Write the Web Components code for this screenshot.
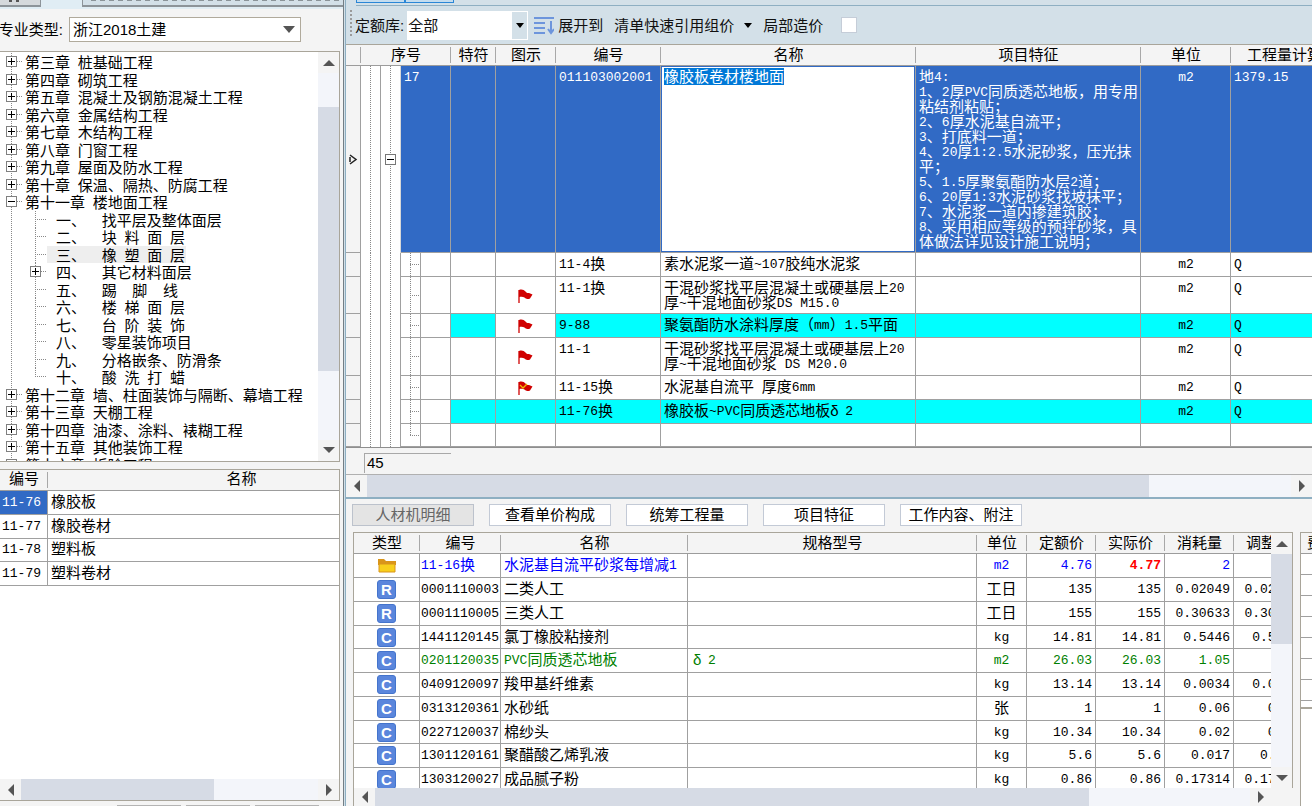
<!DOCTYPE html>
<html lang="zh-CN">
<head>
<meta charset="utf-8">
<meta name="viewport" content="width=device-width, initial-scale=1">
<title>清单计价</title>
<style>
html,body{margin:0;height:100%;overflow:hidden}
body{font:15px/15px "Liberation Sans","Noto Sans CJK SC",sans-serif;color:#000;background:#f4f4f4}
</style>
</head>
<body>
<cost-app></cost-app>
<script>
const BASE=`*{box-sizing:border-box}
.l{font-family:"Liberation Mono",monospace;font-size:13px;line-height:0;white-space:pre;vertical-align:1px}
.d{display:inline-block;width:15px;line-height:0}
button,select,textarea,input{font:inherit;color:inherit;margin:0;border-radius:0}
table{border-collapse:separate;border-spacing:0;table-layout:fixed}
th{font-weight:400;padding:0 0 2px;height:21px;background:linear-gradient(#a8a8a8,#a8a8a8) right center/1px 16px no-repeat #f4f4f4;border-bottom:1px solid #9c9c9c;white-space:nowrap}
td{padding:0 3px 2px;border-right:1px solid #a0a0a0;border-bottom:1px solid #a0a0a0;white-space:nowrap;overflow:hidden;background-color:#fff}`;
/* Half-width runs get the monospace face; everything else stays in the CJK face. */
const mix=t=>t.replace(/[\x20-\x7e]+/g,m=>`<span class="l">${m}</span>`).replace(/δ/g,'<span class="d">δ</span>');
const define=(name,css,html)=>customElements.define(name,class extends HTMLElement{
  constructor(){super();this.attachShadow({mode:'open'}).innerHTML=`<style>${BASE}${css}</style>${typeof html==='function'?html(this):html}`}
});

/* Scroll bar: track is split by the before / thumb / after weights. */
define('scroll-bar',`
:host{display:flex;background:#f3f5fa;min-width:0;min-height:0}
:host([vertical]){flex:0 0 21px;flex-direction:column}
button{flex:0 0 21px;border:0;padding:0;background:#f4f4f4;display:grid;place-items:center}
svg{width:12px;height:12px;fill:#555}
i{display:block;min-width:0;min-height:0}
.t{background:#d6dbe5}`,
el=>{const v=el.hasAttribute('vertical'),[a,b,c]=el.getAttribute('span').split(' ');
const p=v?['M0 9 6 3 12 9z','M0 3 6 9 12 3z']:['M9 0 3 6 9 12z','M3 0 9 6 3 12z'],n=v?['向上','向下']:['向左','向右'];
const btn=k=>`<button aria-label="${n[k]}"><svg viewBox="0 0 12 12"><path d="${p[k]}"/></svg></button>`;
return `${btn(0)}<i style="flex:${a}"></i><i class="t" style="flex:${b}"></i><i style="flex:${c}"></i>${btn(1)}`});

const tree=[['+','第三章 桩基础工程'],['+','第四章 砌筑工程'],['+','第五章 混凝土及钢筋混凝土工程'],['+','第六章 金属结构工程'],['+','第七章 木结构工程'],['+','第八章 门窗工程'],['+','第九章 屋面及防水工程'],['+','第十章 保温、隔热、防腐工程'],['-','第十一章 楼地面工程'],
['','一、  找平层及整体面层'],['','二、  块 料 面 层'],['s','三、  橡 塑 面 层'],['c','四、  其它材料面层'],['','五、  踢  脚  线'],['','六、  楼 梯 面 层'],['','七、  台 阶 装 饰'],['','八、  零星装饰项目'],['','九、  分格嵌条、防滑条'],['e','十、  酸 洗 打 蜡'],
['+','第十二章 墙、柱面装饰与隔断、幕墙工程'],['+','第十三章 天棚工程'],['+','第十四章 油漆、涂料、裱糊工程'],['+','第十五章 其他装饰工程'],['+','第十六章 拆除工程']];
define('chapter-tree',`
:host{display:flex;overflow:hidden;background:#fff}
.box{flex:1;min-width:0;overflow:hidden;padding-top:1px}
ul{list-style:none;margin:0;padding:0;height:420px;display:grid;grid-auto-rows:1fr;
 background:repeating-linear-gradient(#888 0 1px,transparent 1px 2px) 11px 0/1px 100% no-repeat}
li{display:flex;align-items:center;white-space:nowrap;
 background:repeating-linear-gradient(90deg,#888 0 1px,transparent 1px 2px) 17px 50%/6px 1px no-repeat;padding-left:6px}
b{flex:none;width:11px;height:11px;border:1px solid #808080;margin-right:8px;
 background:linear-gradient(#000,#000) center/7px 1px no-repeat,linear-gradient(#000,#000) center/1px 7px no-repeat,#fff}
.m b{background:linear-gradient(#000,#000) center/7px 1px no-repeat,#fff}
.k{padding-left:47px;--h:100%;background:repeating-linear-gradient(#888 0 1px,transparent 1px 2px) 35px 0/1px var(--h) no-repeat,repeating-linear-gradient(90deg,#888 0 1px,transparent 1px 2px) 35px 50%/12px 1px no-repeat}
.x{padding-top:2px}
.k .x{padding:2px 1px 0 9px}
.e{--h:50%}
.s .x{background:#eee}
.c{padding-left:30px}.c b{margin-right:6px}`,
`<div class="box"><ul role="tree">${tree.map(([k,t])=>{const top=k==='+'||k==='-';
return `<li role="treeitem" class="${top?(k==='-'?'m':''):'k '+k}">${top||k==='c'?'<b></b>':''}<span class="x">${mix(t)}</span></li>`}).join('')}</ul></div>
<scroll-bar vertical span="34 263 69"></scroll-bar>`);

define('quota-list',`
:host{display:flex;flex-direction:column;overflow:hidden;background:#fff}
.box{flex:1;overflow:hidden}
table{width:435px}
td{height:24px}tr:nth-child(3) td{height:23px}
td:first-child{padding:0 0 2px 2px}
td:last-child{border-right:0}
.s{background-color:#316ac5;color:#fff}
scroll-bar{height:21px}`,
`<div class="box"><table><colgroup><col style="width:48px"><col></colgroup><thead><tr><th>编号</th><th>名称</th></tr></thead><tbody>
${[['11-76','橡胶板'],['11-77','橡胶卷材'],['11-78','塑料板'],['11-79','塑料卷材']].map(([a,b],i)=>`<tr><td class="${i?'':'s'}">${mix(a)}</td><td>${b}</td></tr>`).join('')}
</tbody></table></div><scroll-bar span="0 194 104"></scroll-bar>`);

define('quota-pane',`
:host{display:flex;flex-direction:column;overflow:hidden;background:#f4f4f4}
.tabs{flex:0 0 9px;display:flex;align-items:flex-start;gap:41px;background:#e0edf4}
.tabs i{height:7px;border:solid #8d9499;border-width:0 1px 2px;background:#cfdce4}
.tabs i:first-child{width:41px;border-left:0;background:repeating-linear-gradient(90deg,#555 0 3px,transparent 3px 7px) 9px 0/14px 2px no-repeat,#d5d9dc}
.tabs i:last-child{flex:1;border-right:0;background:repeating-linear-gradient(90deg,#8b9499 0 5px,transparent 5px 9px) 8px 0/100% 1px no-repeat,#d3e0e8}
.row{flex:0 0 42px;display:flex;align-items:center;padding-bottom:2px}
label{width:69px;display:flex;justify-content:flex-end;overflow:hidden;padding-right:6px;white-space:nowrap}
.sel{position:relative;width:232px;height:25px}
select{width:100%;height:100%;appearance:none;border:1px solid #b0aa9c;background:#fff;padding:0 3px;outline:0}
.sel svg{position:absolute;right:6px;top:8px;width:12px;height:9px;fill:#555;pointer-events:none}
chapter-tree{flex:411 0 0;border:1px solid #a9a59a;border-left:0;margin-right:3px}
quota-list{flex:332 0 0;border:1px solid #a9a59a;border-left:0;margin:7px 3px 0 0}
.foot{flex:0 0 5px;display:flex;align-items:flex-end;gap:5px;padding-left:117px}
.foot i{width:64px;height:1px;background:#b4b4b4}`,
`<div class="tabs"><i></i><i></i></div>
<div class="row"><label for="t">专业类型:</label><div class="sel"><select id="t"><option>浙江2018土建</option></select><svg viewBox="0 0 12 9"><path d="M0 1h12L6 8z"/></svg></div></div>
<chapter-tree></chapter-tree><quota-list></quota-list><div class="foot"><i></i><i></i><i></i></div>`);

define('cost-toolbar',`
:host{display:flex;flex-direction:column;background:#d3e0e8;height:45px;border-bottom:1px solid #a9a59a;overflow:hidden}
.up{flex:0 0 6px;margin-left:10px;border-bottom:1px solid #8eafc2;display:flex}
.up i{width:49px;height:3px;border:1px solid #2a86d6;border-top:0;background:#c4dcee}
.bar{flex:1;display:flex;align-items:center;padding-left:3px;white-space:nowrap;
 background:repeating-linear-gradient(#9a9a9a 0 2px,transparent 2px 4px) 4px 4px/2px 28px no-repeat;color:#111}
label[for=lib]{margin-left:6px;margin-right:3px}
.sel{position:relative;width:121px;height:29px}
select{appearance:none;border:0;width:100%;height:100%;padding:0 0 0 1px;background:linear-gradient(#d3e0e8,#d3e0e8) 105px 1px/15px 27px no-repeat,#fff}
svg{display:block;flex:none}
.sel svg{position:absolute;right:4px;top:12px;pointer-events:none}
button{border:0;background:none;padding:0;display:flex;align-items:center}
.b1{gap:4px;margin:0 11px 0 6px}.b2{gap:10px;margin-right:11px}
.ck{display:flex;align-items:center;gap:18px}
input{appearance:none;width:16px;height:16px;border:1px solid #c5cdd8;background:#fff}`,
`<div class="up"><i></i><i></i></div><div class="bar"><label for="lib">定额库:</label><div class="sel"><select id="lib"><option>全部</option></select><svg width="8" height="5"><path d="M0 0h8L4 5z"/></svg></div>
<button class="b1"><svg width="20" height="19" fill="none" stroke="#6d95dc" stroke-width="2"><path d="M0 2h20M0 7h11M0 12h11M0 17h11M17 5v12M14 13l3 4 3-4"/></svg>展开到</button>
<button class="b2">清单快速引用组价<svg width="8" height="5"><path d="M0 0h8L4 5z"/></svg></button>
<span class="ck"><label for="part">局部造价</label><input id="part" type="checkbox"></span></div>`);

const flag=(c)=>`<svg width="15" height="15" viewBox="0 0 15 15"><path d="M1 1v13" stroke="#d00000" stroke-width="1.3"/><path d="M1 1C4 0 6 1 7.500 2.500 9 4.500 10 4 11 4l3.500 1.500L12 9.500C10 10.500 8 10 6.500 8.500 5 7.500 3 7.500 1 8z" fill="#d00000"/>${c?'<path d="M2 4l3 3 4-4" fill="none" stroke="#f2b705" stroke-width="1.300"/>':''}</svg>`;
const bill=[[24,'','11-4换','素水泥浆一道~107胶纯水泥浆'],[37,'f','11-1换','干混砂浆找平层混凝土或硬基层上20<br>厚~干混地面砂浆DS M15.0'],[24,'f h','9-88','聚氨酯防水涂料厚度（mm）1.5平面'],[38,'f','11-1','干混砂浆找平层混凝土或硬基层上20<br>厚~干混地面砂浆 DS M20.0'],[24,'g','11-15换','水泥基自流平 厚度6mm'],[24,'h','11-76换','橡胶板~PVC同质透芯地板δ2'],[23,'','','']];
const feature=['地4:','1、2厚PVC同质透芯地板，用专用','粘结剂粘贴；','2、6厚水泥基自流平；','3、打底料一道；','4、20厚1:2.5水泥砂浆，压光抹','平；','5、1.5厚聚氨酯防水层2道；','6、20厚1:3水泥砂浆找坡抹平；','7、水泥浆一道内掺建筑胶；','8、采用相应等级的预拌砂浆，具','体做法详见设计施工说明；'];
const lines=s=>s.split('<br>').map(mix).join('<br>');
define('bill-grid',`
:host{display:flex;flex-direction:column;overflow:hidden;background:#f4f4f4}
.box{overflow:hidden;border-bottom:1px solid #8e8e8e}
table{width:100%;min-width:1007px}
td{vertical-align:top;padding:3px 2px 0 3px}
.n{background-color:#f4f4f4;padding:0;vertical-align:middle;text-align:center}
.n svg{display:block;margin:auto}
.v{padding:0;border-bottom:0;position:relative;background:repeating-linear-gradient(#888 0 1px,#fff 1px 2px) 9px 0/1px var(--h,100%) no-repeat,#fff}
.w{background:repeating-linear-gradient(#888 0 1px,transparent 1px 2px) 9px 0/1px var(--h,100%) no-repeat,repeating-linear-gradient(90deg,#888 0 1px,transparent 1px 2px) 9px 50%/10px 1px no-repeat,#fff;border-bottom:1px solid #a0a0a0}
tr:last-child .w{--h:50%}
.m{vertical-align:middle;overflow:visible;border-right-color:#d8d8d8}
.m b{display:block;width:11px;height:11px;margin-left:4px;border:1px solid #777;background:linear-gradient(#000,#000) center/7px 1px no-repeat,#fff}
.c{text-align:center}
.i{vertical-align:middle;text-align:center;padding:2px 0 0}
.i svg{display:block;margin:auto}
.on td:not(.n,.v,.e){background-color:#316ac5;color:#fff}
.h .y{background-color:#0ff}
.on .e{padding:0;height:187px}
textarea{display:block;width:100%;height:186px;border:1px solid #316ac5;outline:0;resize:none;padding:2px;background:#fff;overflow:hidden;line-height:15px}
textarea::selection{background:#0078d7;color:#fff}
.foot{height:27px;padding:5px 0 0 18px;border-bottom:1px solid #b0b0b0}
output{display:block;width:87px;height:20px;border:solid #a8a8a8;border-width:1px 0 0 1px;padding:1px 2px}
scroll-bar{height:22px}`,
`<div class="box"><table><colgroup>${[15,20,20,20,30,45,60,105,255,225,90].map(w=>`<col style="width:${w}px">`).join('')}<col></colgroup>
<thead><tr><th></th><th colspan="4">序号</th><th>特符</th><th>图示</th><th>编号</th><th>名称</th><th>项目特征</th><th>单位</th><th>工程量计算式</th></tr></thead><tbody>
<tr class="on"><td class="n"><svg width="9" height="11" fill="none" stroke="#222" stroke-width="1.500"><path d="M1 1l6 4.500L1 10M1 3v5" /></svg></td><td class="v"></td><td class="v m"><b></b></td><td colspan="2">${mix('17')}</td><td></td><td></td><td>${mix('011103002001')}</td><td class="e"><textarea aria-label="名称" spellcheck="false">橡胶板卷材楼地面</textarea></td><td style="overflow:visible">${lines(feature.join('<br>'))}</td><td class="c">${mix('m2')}</td><td>${mix('1379.15')}</td></tr>
${bill.map(([h,k,a,b])=>`<tr class="${k.includes('h')?'h':''}" style="height:${h}px"><td class="n"></td><td class="v"></td><td class="v"></td><td class="v w"></td><td></td><td class="y"></td><td class="i ${k==='h'?'y':''}">${/[fg]/.test(k)?flag(k==='g'):''}</td><td class="y">${mix(a)}</td><td class="y">${lines(b)}</td><td class="y"></td><td class="c y">${a?mix('m2'):''}</td><td class="y">${a?mix('Q'):''}</td></tr>`).join('')}
</tbody></table></div><div class="foot"><output>45</output></div><scroll-bar span="0 780 142"></scroll-bar>`);

define('detail-tabs',`
:host{display:flex;gap:15px;padding:5px 0 0 6px;height:35px;background:#f4f4f4;border-top:2px solid #8eafc2}
button{flex:none;width:122px;height:22px;border:1px solid #c3cad6;background:#fff;padding:0 0 1px;line-height:18px}
button[disabled]{background:#e4e4e4;color:#666;border-color:#bcc2cc}`,
`<button disabled>人材机明细</button><button>查看单价构成</button><button>统筹工程量</button><button>项目特征</button><button>工作内容、附注</button>`);

const res=[['F','11-16换','水泥基自流平砂浆每增减1','','m2','4.76','4.77','2',''],['R','0001110003','二类人工','','工日','135','135','0.02049','0.02049'],['R','0001110005','三类人工','','工日','155','155','0.30633','0.30633'],['C','1441120145','氯丁橡胶粘接剂','','kg','14.81','14.81','0.5446','0.5446'],['C','0201120035','PVC同质透芯地板','δ2','m2','26.03','26.03','1.05',''],['C','0409120097','羧甲基纤维素','','kg','13.14','13.14','0.0034','0.0034'],['C','0313120361','水砂纸','','张','1','1','0.06','0.06'],['C','0227120037','棉纱头','','kg','10.34','10.34','0.02','0.02'],['C','1301120161','聚醋酸乙烯乳液','','kg','5.6','5.6','0.017','0.017'],['C','1303120027','成品腻子粉','','kg','0.86','0.86','0.17314','0.17314']];
define('resource-grid',`
:host{display:flex;flex:1;min-height:0;gap:7px;padding-left:7px;background:#f4f4f4}
.main{flex:1;min-width:0;display:flex;flex-direction:column;border:solid #a9a59a;border-width:1px 0 0 1px}
.top{flex:1;display:flex;min-height:0;border-right:1px solid #a9a59a}
.box{flex:1;min-width:0;overflow:hidden;background:#fff}
table{width:calc(100% + 32px)}
td{height:24px}tr:nth-child(4n) td{height:23px}
td:nth-child(1){text-align:center;padding:0}
td:nth-child(2){padding:0 0 2px 1px}
td:nth-child(4){padding-left:5px}
td:nth-child(5){text-align:center}
td:nth-child(n+6){text-align:right;padding-right:3px}
.F{color:#00f}.F td:nth-child(7){color:red;font-weight:700}
.G{color:#008000}
svg,u{display:block;margin:auto}
u{width:19px;height:19px;border-radius:3px;background:#5a86dc;border:1px solid #4474cc;color:#fff;text-decoration:none;font:bold 15px/17px "Liberation Sans",sans-serif}
.bot{height:18px;display:flex;padding-right:22px}
.bot scroll-bar{flex:1}
.side{flex:0 0 12px;overflow:hidden;display:flex;flex-direction:column}
.side div{border:solid #a9a59a;border-width:1px 0 2px 1px;background:#fff;height:177px;overflow:hidden}
.side table{width:26px}.side td{height:21px;border-right:0}
.side tr:nth-child(4n) td{height:21px}
.side th{padding-left:6px;text-align:left;background-image:none}
.side p{margin:0;flex:1;background:#fff;border-left:1px solid #a9a59a}`,
`<div class="main"><div class="top"><div class="box"><table><colgroup>${[66,81,187,0,50,69,69,69,69].map(w=>w?`<col style="width:${w}px">`:'<col>').join('')}</colgroup><thead><tr>${['类型','编号','名称','规格型号','单位','定额价','实际价','消耗量','调整量'].map(h=>`<th>${h}</th>`).join('')}</tr></thead><tbody>
${res.map((r,i)=>`<tr class="${i===4?'G':r[0]}"><td>${r[0]==='F'?'<svg width="18" height="15"><path d="M0 1h6l2 2h10v4H0z" fill="#d9951a"/><path d="M1 6h16v8H1z" fill="#f8cf1c" stroke="#d9951a"/></svg>':`<u>${r[0]}</u>`}</td>${r.slice(1).map(c=>`<td>${mix(c)}</td>`).join('')}</tr>`).join('')}
</tbody></table></div><scroll-bar vertical span="0 90 122"></scroll-bar></div><div class="bot"><scroll-bar span="0 712 161"></scroll-bar></div></div>
<div class="side"><div><table><thead><tr><th>费</th></tr></thead><tbody>${'<tr><td></td></tr>'.repeat(7)}</tbody></table></div><p></p></div>`);

define('cost-app',`
:host{display:flex;height:100vh;overflow:hidden}
quota-pane{flex:0 0 343px}
.split{flex:0 0 3px;background:#d3e0e8;border-left:1px solid #747e84;border-right:1px solid #8eafc2}
main{flex:1;min-width:0;display:flex;flex-direction:column}
bill-grid,cost-toolbar,detail-tabs{flex:none}`,
`<quota-pane></quota-pane><div class="split"></div><main><cost-toolbar></cost-toolbar><bill-grid></bill-grid><detail-tabs></detail-tabs><resource-grid></resource-grid></main>`);

const editor=document.querySelector('cost-app').shadowRoot.querySelector('bill-grid').shadowRoot.querySelector('textarea');
editor.focus();
editor.select();
</script>
</body>
</html>
